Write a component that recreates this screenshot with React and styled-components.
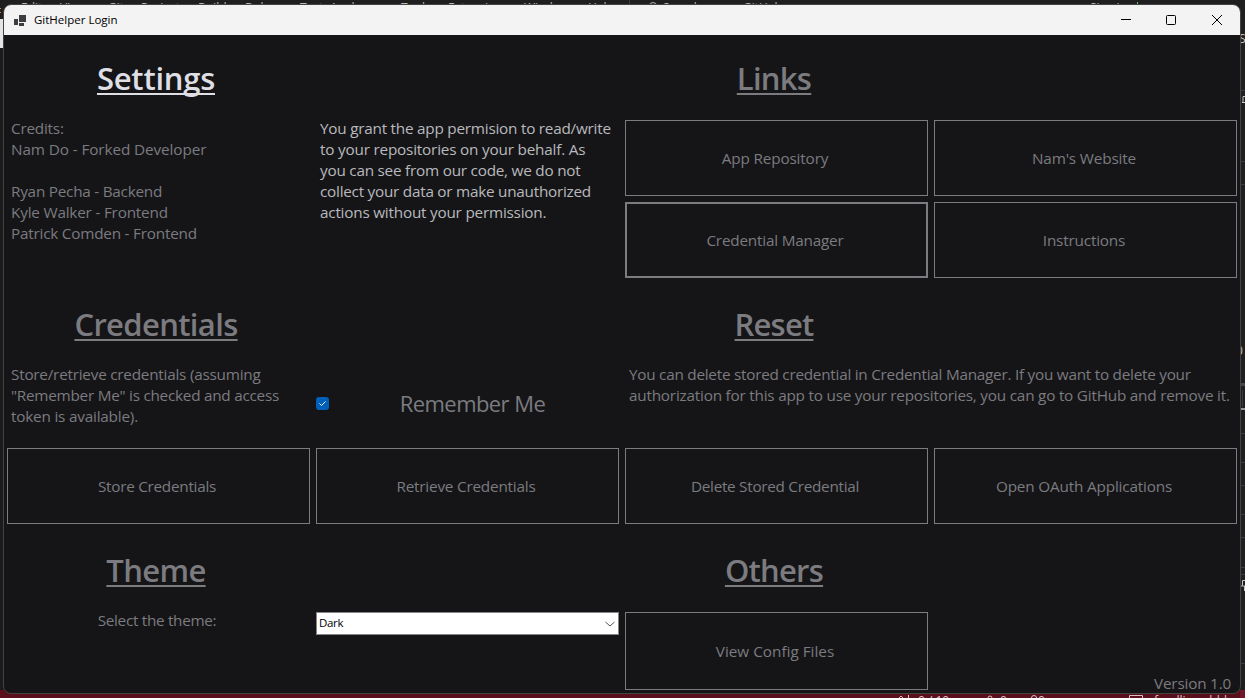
import React from "react";
import styled, { createGlobalStyle } from "styled-components";

const GlobalStyle = createGlobalStyle`
  * { box-sizing: border-box; }
  body { margin: 0; background: #1f1f1f; overflow: hidden; }
`;

const font = `"Open Sans", "Noto Sans", sans-serif`;

const Desktop = styled.div`
  position: relative;
  width: 1245px;
  height: 698px;
  overflow: hidden;
  background: #1f1f1f;
  font-family: ${font};
`;

const Backdrop = styled.svg`
  position: absolute;
  inset: 0;
`;

const MenuStrip = styled.div`
  position: absolute;
  left: 0;
  top: 0;
  width: 1245px;
  height: 20px;
  font-size: 12px;
  line-height: 16px;
  color: #b8b8b8;
`;

const MenuWord = styled.span`
  position: absolute;
  white-space: nowrap;
  left: ${(p) => p.$x}px;
`;

const StatusStrip = styled(MenuStrip)`
  top: 693px;
  height: 18px;
  color: #d8c4c8;
`;

const EdgeGlyph = styled.span`
  position: absolute;
  left: ${(p) => p.$x}px;
  top: ${(p) => p.$y}px;
  font-size: 12px;
  line-height: 16px;
  color: #c4c4c4;
`;

const Window = styled.section`
  position: absolute;
  left: 3px;
  top: 4px;
  width: 1238px;
  height: 690px;
  display: flex;
  flex-direction: column;
  border: 1px solid #434344;
  border-radius: 8px;
  background: #151517;
  overflow: hidden;
`;

const TitleBar = styled.header`
  display: flex;
  align-items: center;
  height: 30px;
  flex: none;
  padding-left: 10px;
  background: #f3f3f3;
  color: #000;
`;

const Title = styled.span`
  flex: 1;
  margin-left: 8px;
  font-size: 11.5px;
  line-height: 16px;
`;

const Controls = styled.div`
  display: flex;
`;

const Control = styled.button`
  display: grid;
  place-items: center;
  width: ${(p) => p.$w || 46}px;
  height: 30px;
  padding: 0;
  border: 0;
  background: none;
`;

const Grid = styled.main`
  flex: 1;
  display: grid;
  grid-template-columns: repeat(4, 309px);
  grid-template-rows: repeat(7, 82px) 84px;
  color: #7b7b80;
`;

const Cell = styled.div`
  display: flex;
  grid-row: ${(p) => p.$row};
  grid-column: ${(p) => p.$col};
  justify-content: ${(p) => p.$justify || "flex-start"};
  align-items: ${(p) => p.$align || "flex-start"};
  padding: ${(p) => p.$pad || "3px"};
`;

const Heading = styled.h2`
  margin: 0;
  font-size: 31px;
  font-weight: 600;
  line-height: 42px;
  white-space: nowrap;
  letter-spacing: ${(p) => p.$ls || 0}px;
  color: ${(p) => (p.$active ? "#dedee4" : "#7b7b80")};
  text-decoration: underline;
  text-decoration-thickness: 2px;
  text-underline-offset: 3px;
  text-decoration-skip-ink: none;
`;

const Paragraph = styled.p`
  margin: 0;
  font-size: 15.3px;
  line-height: 21px;
  color: ${(p) => (p.$bright ? "#b9b9be" : "#7b7b80")};
`;

const Line = styled.span`
  display: block;
  height: 21px;
  white-space: nowrap;
  letter-spacing: ${(p) => p.$ls || 0}px;
`;

const Button = styled.button`
  width: 100%;
  height: 100%;
  padding: 0 3px 0 0;
  border: ${(p) => (p.$focused ? 2 : 1)}px solid #7b7b80;
  background: #151517;
  color: #7b7b80;
  font-family: ${font};
  font-size: 15.3px;
  line-height: 21px;
  letter-spacing: ${(p) => p.$ls || 0}px;
`;

const Remember = styled.label`
  display: flex;
  align-items: center;
  width: 100%;
`;

const Check = styled.span`
  display: grid;
  place-items: center;
  width: 13px;
  height: 13px;
  border-radius: 3px;
  background: #005fb8;
`;

const RememberText = styled.span`
  flex: 1;
  padding-right: 3px;
  text-align: center;
  font-size: 22px;
  line-height: 30px;
  letter-spacing: ${(p) => p.$ls || 0}px;
`;

const Select = styled.div`
  display: flex;
  align-items: center;
  justify-content: space-between;
  width: 100%;
  height: 23px;
  padding: 0 3px 0 2px;
  border: 1px solid #858585;
  background: #fff;
  color: #000;
  font-size: 11.5px;
`;

const SelectValue = styled.span`
  line-height: 16px;
  padding-bottom: 2px;
  letter-spacing: -0.35px;
`;

const Version = styled.span`
  font-size: 15.3px;
  line-height: 21px;
  white-space: nowrap;
  letter-spacing: ${(p) => p.$ls || 0}px;
`;

const menu = [
  ["Edit", 21], ["View", 60], ["Git", 108], ["Project", 141], ["Build", 198],
  ["Debug", 245], ["Test", 300], ["Analyze", 330], ["Tools", 401], ["Extensions", 448],
  ["Window", 524], ["Help", 588], ["Search", 663], ["GitHelper", 743], ["Sign in", 1090],
];

const status = [["0 / 10", 918], ["0", 1000], ["0", 1038], ["feudlierrobbl", 1154]];

const actions = [
  { label: "App Repository", row: 2, col: 3, ls: -0.15 },
  { label: "Nam's Website", row: 2, col: 4, ls: -0.15 },
  { label: "Credential Manager", row: 3, col: 3, ls: -0.2, focused: true },
  { label: "Instructions", row: 3, col: 4, ls: -0.18 },
  { label: "Store Credentials", row: 6, col: 1, ls: -0.27 },
  { label: "Retrieve Credentials", row: 6, col: 2, ls: -0.2 },
  { label: "Delete Stored Credential", row: 6, col: 3, ls: -0.28 },
  { label: "Open OAuth Applications", row: 6, col: 4, ls: -0.17 },
  { label: "View Config Files", row: 8, col: 3, ls: 0 },
];

const headings = [
  { label: "Settings", row: 1, col: 1, ls: -0.25, active: true },
  { label: "Links", row: 1, col: 3, ls: -0.7 },
  { label: "Credentials", row: 4, col: 1, ls: -0.65 },
  { label: "Reset", row: 4, col: 3, ls: -0.8 },
  { label: "Theme", row: 7, col: 1, ls: -0.65 },
  { label: "Others", row: 7, col: 3, ls: -0.75 },
];

const notes = [
  {
    row: "2 / 4", col: 1,
    lines: [
      ["Credits:", -0.22], ["Nam Do - Forked Developer", -0.1], ["", 0],
      ["Ryan Pecha - Backend", -0.24], ["Kyle Walker - Frontend", -0.2], ["Patrick Comden - Frontend", -0.22],
    ],
  },
  {
    row: "2 / 4", col: 2, bright: true,
    lines: [
      ["You grant the app permision to read/write", -0.235],
      ["to your repositories on your behalf. As", -0.2],
      ["you can see from our code, we do not", -0.23],
      ["collect your data or make unauthorized", -0.25],
      ["actions without your permission.", -0.22],
    ],
  },
  {
    row: 5, col: 1,
    lines: [
      ["Store/retrieve credentials (assuming", -0.23],
      ["\"Remember Me\" is checked and access", -0.255],
      ["token is available).", -0.2],
    ],
  },
  {
    row: 5, col: "3 / 5",
    lines: [
      ["You can delete stored credential in Credential Manager. If you want to delete your", -0.25],
      ["authorization for this app to use your repositories, you can go to GitHub and remove it.", -0.215],
    ],
  },
];

const edgeLines = [90, 161, 184, 433, 462, 485, 514, 537, 567, 574, 663];

export default function App() {
  return (
    <Desktop>
      <GlobalStyle />
      <Backdrop width="1245" height="698">
        <rect x="0" y="19" width="4" height="29" fill="#e4e4e4" />
        <rect x="0" y="48" width="4" height="642" fill="#1b1b1c" />
        <path d="M0 8.500h1M0 12.500h1" stroke="#c98a4b" />
        <rect x="0" y="690" width="1245" height="8" fill="#5a0f1d" />
        <rect x="1240" y="690" width="5" height="8" fill="#721729" />
        <path d="M629.5 0v5" stroke="#3d3d3d" />
        <circle cx="653" cy="6" r="3.5" fill="none" stroke="#b8b8b8" />
        <path d="M1137.5 2v3" stroke="#6cc070" />
        {edgeLines.map((y) => <path key={y} d={`M1240 ${y + 0.5}h5`} stroke="#3a3a3c" />)}
        <path d="M1240 384.5h5" stroke="#464648" strokeWidth="3" />
        <path d="M1240 409h5" stroke="#99999b" strokeWidth="2" />
        <path d="M1242.5 390v17" stroke="#3a3a3c" />
        <path d="M1245 96.500h-2v6M1242 102.500h3" stroke="#c8c8c8" fill="none" />
        <path d="M1245 580.500h-2.500v5M1241 586h4M1244.500 586v5" stroke="#c8c8c8" fill="none" />
      </Backdrop>
      <EdgeGlyph $x={1239} $y={31}>S</EdgeGlyph>
      <EdgeGlyph $x={1236} $y={343}>0</EdgeGlyph>
      <MenuStrip>
        {menu.map(([word, x]) => <MenuWord key={word} $x={x}>{word}</MenuWord>)}
      </MenuStrip>
      <Window>
        <TitleBar>
          <svg width="12" height="11" viewBox="0 0 12 11" fill="#3e3e40">
            <path d="M0 4h4v6H0zM5 0h7v7H5zM5 8h5v3H5z" />
          </svg>
          <Title>GitHelper Login</Title>
          <Controls>
            <Control aria-label="Minimize" $w={45}>
              <svg width="10" height="10"><path d="M0 4.500h10" stroke="#000" /></svg>
            </Control>
            <Control aria-label="Maximize" $w={46}>
              <svg width="10" height="10"><rect x=".5" y=".5" width="9" height="9" rx="1" fill="none" stroke="#000" /></svg>
            </Control>
            <Control aria-label="Close" $w={46}>
              <svg width="10" height="10"><path d="M0 0l10 10M10 0L0 10" stroke="#000" /></svg>
            </Control>
          </Controls>
        </TitleBar>
        <Grid>
          {headings.map((h) => (
            <Cell key={h.label} $row={h.row} $col={h.col} $justify="center" $pad="22px 5px 0 0">
              <Heading $ls={h.ls} $active={h.active}>{h.label}</Heading>
            </Cell>
          ))}
          {notes.map((n, i) => (
            <Cell key={i} $row={n.row} $col={n.col} $pad="1px 7px 0">
              <Paragraph $bright={n.bright}>
                {n.lines.map(([text, ls], k) => <Line key={k} $ls={ls}>{text}</Line>)}
              </Paragraph>
            </Cell>
          ))}
          {actions.map((a) => (
            <Cell key={a.label} $row={a.row} $col={a.col}>
              <Button $ls={a.ls} $focused={a.focused}>{a.label}</Button>
            </Cell>
          ))}
          <Cell $row={5} $col={2} $align="center" $pad="2px 3px 4px">
            <Remember>
              <Check>
                <svg width="9" height="9" viewBox="0 0 9 9"><path d="M1.500 4.500l2 2 4-4" fill="none" stroke="#fff" /></svg>
              </Check>
              <RememberText $ls={-0.57}>Remember Me</RememberText>
            </Remember>
          </Cell>
          <Cell $row={8} $col={1} $justify="center" $pad="1px 3px 0 0">
            <Version $ls={-0.3}>Select the theme:</Version>
          </Cell>
          <Cell $row={8} $col={2}>
            <Select>
              <SelectValue>Dark</SelectValue>
              <svg width="10" height="6"><path d="M.5 1l4.500 4 4.500-4" fill="none" stroke="#555" /></svg>
            </Select>
          </Cell>
          <Cell $row={8} $col={4} $justify="flex-end" $align="flex-start" $pad="64px 9px 0 0">
            <Version $ls={-0.2}>Version 1.0</Version>
          </Cell>
        </Grid>
      </Window>
      <Backdrop width="1245" height="698" pointerEvents="none">
        <g fill="none" stroke="#d8c4c8">
          <path d="M899 698l2-2 2 2M908.500 695v3M1129.500 698v-2.500h13v2.500" />
          <circle cx="990" cy="698" r="2" />
          <circle cx="1034" cy="698" r="2.500" />
        </g>
      </Backdrop>
      <StatusStrip>
        {status.map(([word, x]) => <MenuWord key={x} $x={x}>{word}</MenuWord>)}
      </StatusStrip>
    </Desktop>
  );
}
